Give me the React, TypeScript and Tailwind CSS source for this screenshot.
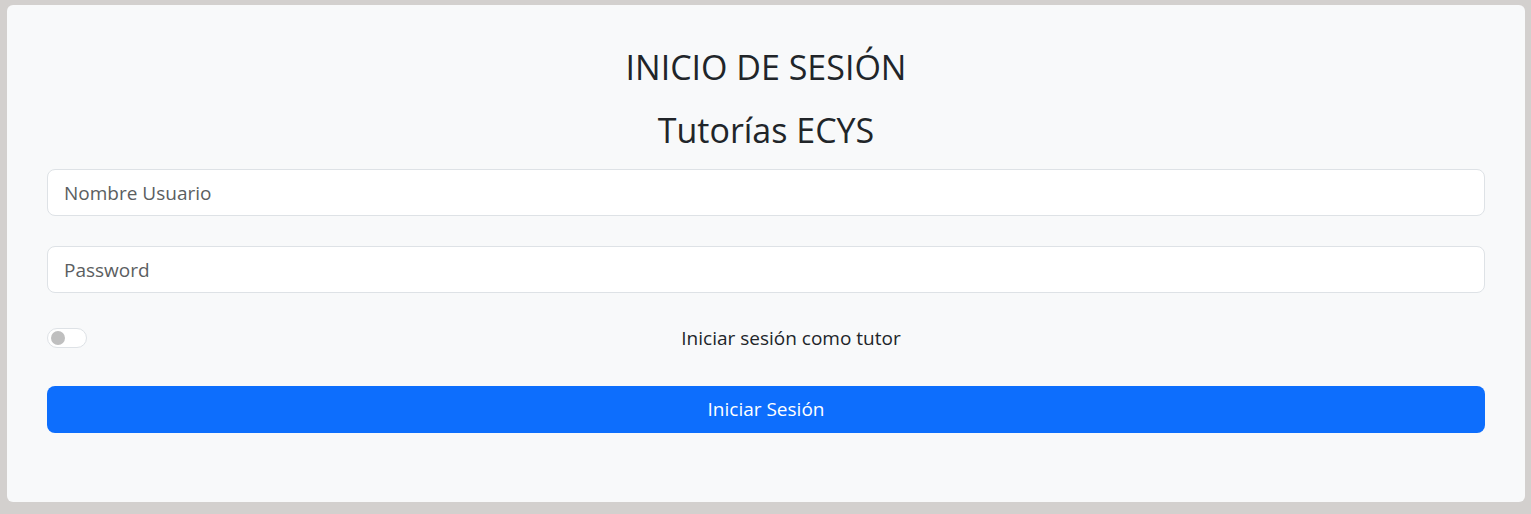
import React from "react";

export default function App() {
  const font = { fontFamily: '"Open Sans", "Noto Sans", sans-serif' };
  return (
    <div className="h-[514px] w-full bg-[#d3d0ce] pl-[7px] pr-[6px] pt-[5px]" style={font}>
      <div className="flex h-[497px] flex-col rounded-[6px] bg-[#f8f9fa] px-[40px] pt-[39px] text-[#212529]">
        <h2 className="text-center text-[34px] leading-[46px] font-normal">INICIO DE SESIÓN</h2>
        <h2 className="mt-[17px] text-center text-[34px] leading-[46px] font-normal">Tutorías ECYS</h2>
        <input
          className="mt-[16px] h-[47px] w-full rounded-[8px] border border-[#dee2e6] bg-white px-[16px] text-[19px] text-[#212529] outline-none placeholder:text-[#5b5e61]"
          placeholder="Nombre Usuario"
        />
        <input
          type="password"
          className="mt-[30px] h-[47px] w-full rounded-[8px] border border-[#dee2e6] bg-white px-[16px] text-[19px] text-[#212529] outline-none placeholder:text-[#5b5e61]"
          placeholder="Password"
        />
        <div className="mt-[35px] flex h-[20px] items-center">
          <div className="flex h-[20px] w-[40px] shrink-0 items-center rounded-full border border-[#dee2e6] bg-white px-[3px]">
            <div className="h-[14px] w-[14px] rounded-full bg-[#bfbfbf]" />
          </div>
          <label className="flex-1 pl-[10px] text-center text-[19px] leading-[20px]">Iniciar sesión como tutor</label>
        </div>
        <button className="mt-[38px] h-[47px] w-full rounded-[8px] bg-[#0d6efd] text-[19px] text-white">
          Iniciar Sesión
        </button>
      </div>
    </div>
  );
}
